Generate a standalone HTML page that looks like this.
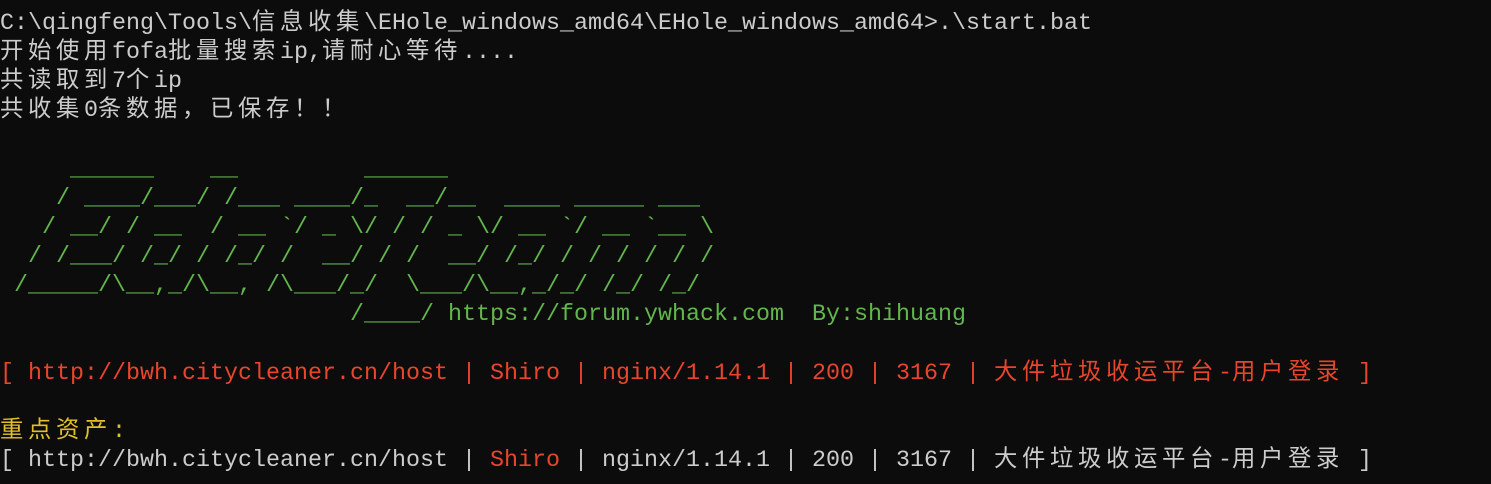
<!DOCTYPE html>
<html><head><meta charset="utf-8"><style>
html,body{margin:0;padding:0;background:#0c0c0c;width:1491px;height:484px;overflow:hidden}
.t{padding-top:10px;font-family:"Liberation Mono","Noto Sans CJK SC",monospace;font-size:23.33px;color:#cccccc}
.t div{height:29.13px;line-height:29.13px;overflow:visible;white-space:pre}
.c{font-family:"Noto Sans CJK SC","Liberation Mono",sans-serif;letter-spacing:4.67px;line-height:0}
.g{color:#63b54d}
.r{color:#e8452c}
.y{color:#e2c02a}
</style></head><body><div class="t">
<div>C:\qingfeng\Tools\<span class="c">信息收集</span>\EHole_windows_amd64\EHole_windows_amd64&gt;.\start.bat</div>
<div><span class="c">开始使用</span>fofa<span class="c">批量搜索</span>ip,<span class="c">请耐心等待</span>....</div>
<div><span class="c">共读取到</span>7<span class="c">个</span>ip</div>
<div><span class="c">共收集</span>0<span class="c">条数据，已保存！！</span></div>
<div> </div>
<div class="g">     ______    __         ______</div>
<div class="g">    / ____/___/ /___ ____/_  __/__  ____ _____ ___</div>
<div class="g">   / __/ / __  / __ `/ _ \/ / / _ \/ __ `/ __ `__ \</div>
<div class="g">  / /___/ /_/ / /_/ /  __/ / /  __/ /_/ / / / / / /</div>
<div class="g"> /_____/\__,_/\__, /\___/_/  \___/\__,_/_/ /_/ /_/</div>
<div class="g">                         /____/ https://forum.ywhack.com  By:shihuang</div>
<div> </div>
<div class="r">[ http://bwh.citycleaner.cn/host | Shiro | nginx/1.14.1 | 200 | 3167 | <span class="c">大件垃圾收运平台</span>-<span class="c">用户登录</span> ]</div>
<div> </div>
<div class="y"><span class="c">重点资产</span>:</div>
<div>[ http://bwh.citycleaner.cn/host | <span class="r">Shiro</span> | nginx/1.14.1 | 200 | 3167 | <span class="c">大件垃圾收运平台</span>-<span class="c">用户登录</span> ]</div>
</div></body></html>
